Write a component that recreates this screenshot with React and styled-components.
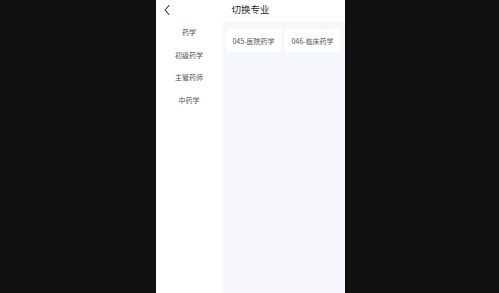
import React from "react";
import styled, { createGlobalStyle } from "styled-components";

const Global = createGlobalStyle`
  html, body { margin: 0; padding: 0; background: #111111; height: 100%; }
  #root { height: 100%; }
  * { box-sizing: border-box; }
`;

const Stage = styled.div`
  display: flex;
  justify-content: center;
  height: 293px;
  padding-left: 2px;
  background: #111111;
  font-family: "Noto Sans CJK SC", "Noto Sans", sans-serif;
`;

const Phone = styled.div`
  width: 189px;
  height: 100%;
  background: #ffffff;
  display: flex;
  flex-direction: column;
`;

const Header = styled.div`
  position: relative;
  height: 22px;
  display: flex;
  align-items: center;
  justify-content: center;
  flex-shrink: 0;
`;

const Back = styled.div`
  position: absolute;
  left: 5px;
  top: 4px;
  width: 12px;
  height: 13px;
  display: flex;
`;

const Title = styled.div`
  font-size: 9.5px;
  font-weight: 400;
  color: #1f1f1f;
  line-height: 1;
  margin-top: -2px;
`;

const Body = styled.div`
  flex: 1;
  display: flex;
`;

const Sidebar = styled.div`
  width: 66px;
  display: flex;
  flex-direction: column;
  margin-top: -1px;
`;

const SideItem = styled.div`
  height: 22.6px;
  display: flex;
  align-items: center;
  justify-content: center;
  font-size: 7px;
  color: #555;
`;

const Content = styled.div`
  flex: 1;
  background: #f6f7fc;
  padding: 7px 4px;
  display: flex;
  align-items: flex-start;
  gap: 4px;
`;

const Card = styled.div`
  background: #ffffff;
  height: 23px;
  display: flex;
  align-items: center;
  justify-content: center;
  font-size: 7px;
  color: #555;
  white-space: nowrap;
  width: 55px;
`;

export default function App() {
  return (
    <>
      <Global />
      <Stage>
        <Phone>
          <Header>
            <Back>
              <svg width="12" height="13" viewBox="0 0 12 13">
                <path d="M8 1.5 L4 6 L8 10.5" fill="none" stroke="#333" strokeWidth="1.1" strokeLinecap="round" strokeLinejoin="round" />
              </svg>
            </Back>
            <Title>切换专业</Title>
          </Header>
          <Body>
            <Sidebar>
              {["药学", "初级药学", "主管药师", "中药学"].map((t) => (
                <SideItem key={t}>{t}</SideItem>
              ))}
            </Sidebar>
            <Content>
              <Card>045-医院药学</Card>
              <Card>046-临床药学</Card>
            </Content>
          </Body>
        </Phone>
      </Stage>
    </>
  );
}
